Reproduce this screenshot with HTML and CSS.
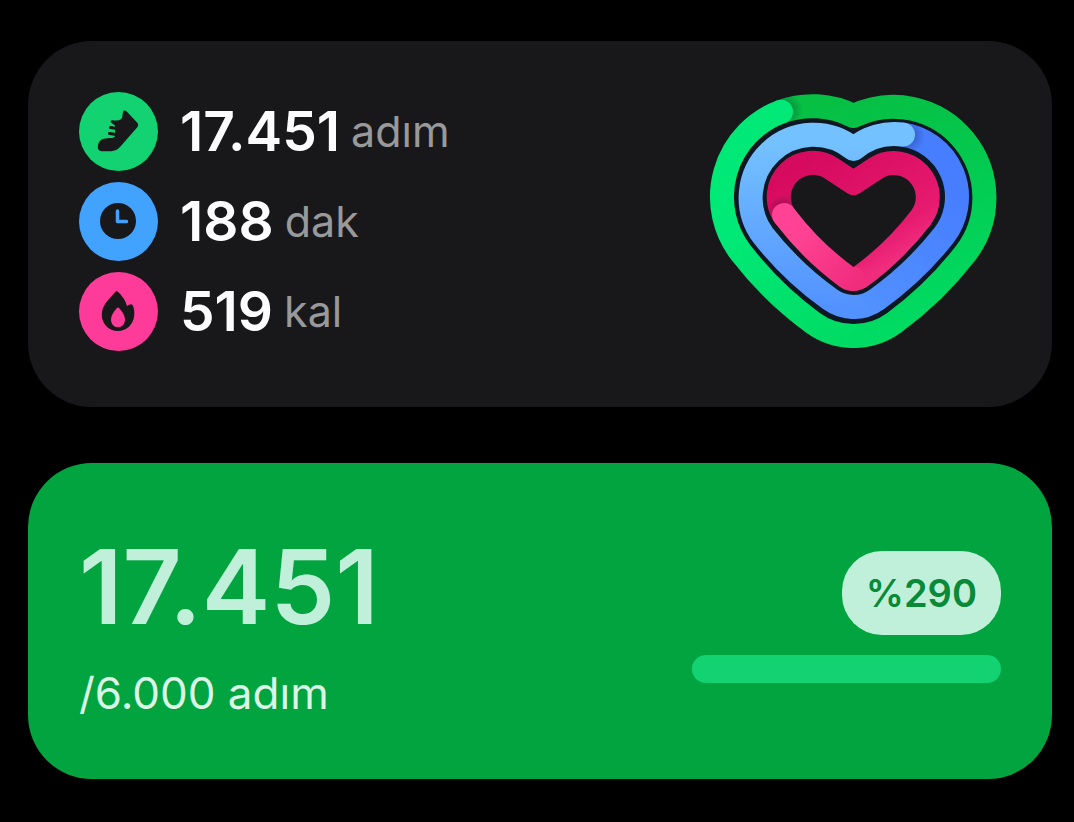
FILE: index.html
```html
<!DOCTYPE html>
<html lang="tr">
<head>
    <meta charset="UTF-8">
    <meta name="viewport" content="width=device-width, initial-scale=1.0">
    <title>Günlük aktivite</title>
    <link rel="stylesheet" href="styles.css">
</head>
<body>
    <main class="widgets">
        <section class="card activity">
            <ul class="stats">
                <li class="stat">
                    <span class="icon icon-steps">
                        <svg viewBox="0 0 79 79" aria-hidden="true">
                            <path d="M44 19.500 Q45.500 17.500 47.500 19.200 L58.500 31 Q60 33 58.500 35 L41 55 Q37.500 59 32 59.200 L22.500 59.200 Q18.800 59 18.800 55 Q18.800 51.500 20.500 49.500 Q22 47 25 46.800 L30 46 Q35 46.500 36 44 L36 33.500 L32 30.500 Q31 28 33.500 28.200 Q43 30 43.500 23.500 Z" fill="#18181a"/>
                            <path d="M31.500 35.600 L38 36.400 M30.500 41.600 L37 42.400" fill="none" stroke="#18181a" stroke-width="3" stroke-linecap="round"/>
                        </svg>
                    </span>
                    <span class="value">17.451</span>
                    <span class="unit">adım</span>
                </li>
                <li class="stat">
                    <span class="icon icon-time">
                        <svg viewBox="0 0 79 79" aria-hidden="true">
                            <circle cx="39" cy="39" r="18" fill="#18181a"/>
                            <path d="M38.500 29 V39.500 H47.500" fill="none" stroke="#42a3ff" stroke-width="3.500" stroke-linecap="round" stroke-linejoin="round"/>
                        </svg>
                    </span>
                    <span class="value">188</span>
                    <span class="unit">dak</span>
                </li>
                <li class="stat">
                    <span class="icon icon-calories">
                        <svg viewBox="0 0 79 79" aria-hidden="true">
                            <path d="M36 20.200 Q37.500 18.500 39.200 20 Q46 26.500 48 34 Q50 32.300 52 32.200 Q53.500 32.200 54 33.800 C55.300 37 55.500 40 55.200 43.500 C54.500 52.500 47.500 59 39 59 C29.500 59 22.800 51.500 22.800 43 C22.800 33 29.500 28 36 20.200 Z" fill="#18181a"/>
                            <path d="M37.800 36.200 Q39 35 40.200 36.200 C43.500 40 46 43.500 46 47.500 C46 52 43 55.200 38.900 55.200 C34.800 55.200 32 52 32 47.500 C32 43.500 34.500 40 37.800 36.200 Z" fill="#ff3b9a"/>
                        </svg>
                    </span>
                    <span class="value">519</span>
                    <span class="unit">kal</span>
                </li>
            </ul>

            <svg class="heart" viewBox="0 0 292 257" role="img" aria-label="Günlük hedefler">
                <defs>
                    <linearGradient id="stepsStart" gradientUnits="userSpaceOnUse" x1="100" y1="10" x2="150" y2="243">
                        <stop offset="0" stop-color="#06bf43"/>
                        <stop offset="1" stop-color="#00db63"/>
                    </linearGradient>
                    <linearGradient id="stepsEnd" gradientUnits="userSpaceOnUse" x1="145" y1="243" x2="40" y2="120">
                        <stop offset="0" stop-color="#00db63"/>
                        <stop offset="1" stop-color="#00e977"/>
                    </linearGradient>
                    <linearGradient id="timeStart" gradientUnits="userSpaceOnUse" x1="245" y1="100" x2="145" y2="214">
                        <stop offset="0" stop-color="#477eff"/>
                        <stop offset="1" stop-color="#5292ff"/>
                    </linearGradient>
                    <linearGradient id="timeEnd" gradientUnits="userSpaceOnUse" x1="145" y1="214" x2="145" y2="50">
                        <stop offset="0" stop-color="#5292ff"/>
                        <stop offset="1" stop-color="#74c1ff"/>
                    </linearGradient>
                    <linearGradient id="caloriesStart" gradientUnits="userSpaceOnUse" x1="80" y1="80" x2="150" y2="190">
                        <stop offset="0" stop-color="#d60b5f"/>
                        <stop offset="0.8" stop-color="#e61b70"/>
                        <stop offset="1" stop-color="#f02c7d"/>
                    </linearGradient>
                    <linearGradient id="caloriesEnd" gradientUnits="userSpaceOnUse" x1="150" y1="186" x2="95" y2="140">
                        <stop offset="0" stop-color="#f02c7d"/>
                        <stop offset="1" stop-color="#ff4293"/>
                    </linearGradient>
                    <radialGradient id="capShadow">
                        <stop offset="0.5" stop-color="#001030" stop-opacity="0.2"/>
                        <stop offset="1" stop-color="#001030" stop-opacity="0"/>
                    </radialGradient>
                </defs>

                <!-- dark gaps between the rings -->
                <path class="gap" d="M144.500 56 A63 63 0 0 0 54.100 142.400 A328 328 0 0 0 120.900 206.200 A40 40 0 0 0 168.100 206.200 A328 328 0 0 0 234.900 142.400 A63 63 0 0 0 144.500 56 Z"/>

                <!-- steps -->
                <path class="ring" stroke="url(#stepsStart)" d="M72 18.700 A91 91 0 0 1 144.500 23 A91 91 0 0 1 257.100 159.500 A357 357 0 0 1 185.300 229.600 A69 69 0 0 1 144.500 243"/>
                <circle cx="76" cy="17.500" r="18" fill="url(#capShadow)"/>
                <path class="ring" stroke="url(#stepsEnd)" d="M144.500 243 A69 69 0 0 1 103.700 229.600 A357 357 0 0 1 31.900 159.500 A91 91 0 0 1 72 18.700"/>

                <!-- minutes -->
                <path class="ring" stroke="url(#timeStart)" d="M194 41.600 A63 63 0 0 1 234.900 142.400 A328 328 0 0 1 168.100 206.200 A40 40 0 0 1 144.500 214"/>
                <circle cx="198" cy="43" r="18" fill="url(#capShadow)"/>
                <path class="ring" stroke="url(#timeEnd)" d="M144.500 214 A40 40 0 0 1 120.900 206.200 A328 328 0 0 1 54.100 142.400 A63 63 0 0 1 144.500 56 A63 63 0 0 1 194 41.600"/>

                <!-- calories -->
                <path class="ring" stroke="url(#caloriesStart)" d="M75 122 A34 34 0 0 1 122.500 75.500 L144.500 90 L166.500 75.500 A34 34 0 0 1 211.900 124.700 A300 300 0 0 1 151.600 183.700 A12 12 0 0 1 144.500 186"/>
                <circle cx="74" cy="118" r="16" fill="url(#capShadow)"/>
                <path class="ring" stroke="url(#caloriesEnd)" d="M144.500 186 A12 12 0 0 1 137.400 183.700 A300 300 0 0 1 77.100 124.700 L75 122"/>
            </svg>
        </section>

        <section class="card goal">
            <div class="goal-text">
                <p class="goal-value">17.451</p>
                <p class="goal-target">/6.000 adım</p>
            </div>
            <div class="goal-progress">
                <label class="percent" for="stepProgress">%290</label>
                <progress id="stepProgress" class="bar" value="100" max="100"></progress>
            </div>
        </section>
    </main>
</body>
</html>
```
FILE: styles.css
```css
body {
    margin: 0;
    background: #000;
    font-family: Inter, "Liberation Sans", sans-serif;
}
.widgets {
    display: flex;
    flex-direction: column;
    gap: 56px;
    padding: 41px 22px 41px 28px;
}
.card {
    display: flex;
    align-items: center;
    justify-content: space-between;
    border-radius: 64px;
}

/* Activity card */
.activity {
    background: #18181a;
    padding: 51px 51px 56px;
}
.stats {
    display: flex;
    flex-direction: column;
    gap: 11px;
    margin: 0;
    padding: 0;
    list-style: none;
}
.stat {
    display: flex;
    align-items: center;
}
.icon {
    width: 79px;
    height: 79px;
    margin-right: 22px;
    border-radius: 50%;
}
.icon svg {
    display: block;
}
.icon-steps {
    background: #12d272;
}
.icon-time {
    background: #42a3ff;
}
.icon-calories {
    background: #ff3b9a;
}
.value {
    color: #fcfcff;
    font-size: 55px;
    font-weight: 600;
    line-height: 79px;
}
.unit {
    margin-left: 11px;
    color: #99999c;
    font-size: 43px;
    font-weight: 400;
    line-height: 79px;
}
.heart {
    width: 292px;
    height: 257px;
}
.ring {
    fill: none;
    stroke-width: 24;
    stroke-linecap: round;
    stroke-linejoin: round;
}
.gap {
    fill: none;
    stroke: #0e1822;
    stroke-width: 34;
}

/* Step goal card */
.goal {
    background: #02a43f;
    padding: 64px 51px 58px;
}
.goal-text p {
    margin: 0;
}
.goal-value {
    color: #c0f0da;
    font-size: 103px;
    font-weight: 600;
    line-height: 120px;
}
.goal-text .goal-target {
    margin-top: 18px;
    color: #dcf6e6;
    font-size: 44px;
    line-height: 56px;
}
.goal-progress {
    display: flex;
    flex-direction: column;
    align-items: flex-end;
    gap: 20px;
    padding-bottom: 14px;
}
.percent {
    padding: 0 24px;
    border-radius: 40px;
    background: #c0f0da;
    color: #088a38;
    font-size: 38px;
    font-weight: 600;
    line-height: 84px;
}
.bar {
    appearance: none;
    width: 309px;
    height: 28px;
    border: none;
    border-radius: 14px;
    overflow: hidden;
    background: #02a43f;
}
.bar::-webkit-progress-bar {
    background: #0c9a42;
}
.bar::-webkit-progress-value {
    background: #12d272;
}
.bar::-moz-progress-bar {
    background: #12d272;
}
```
